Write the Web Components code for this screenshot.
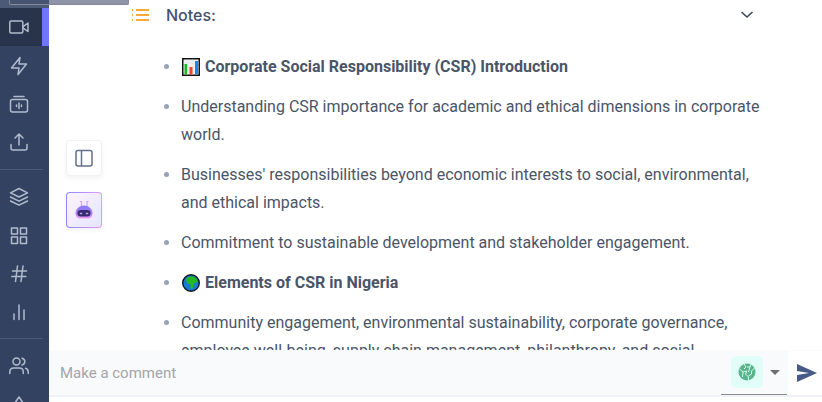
<!DOCTYPE html>
<html lang="en">
<head>
<meta charset="utf-8">
<title>Notes</title>
<style>
body{margin:0;background:#fff;font-family:Roboto,"Liberation Sans",sans-serif;font-size:16px;color:#4a5568}
</style>
</head>
<body>
<notes-app></notes-app>
<script>
const define = (name, html) => {
  const template = document.createElement('template');
  template.innerHTML = html;
  customElements.define(name, class extends HTMLElement {
    constructor() {
      super();
      this.attachShadow({mode: 'open'}).append(template.content.cloneNode(true));
    }
    connectedCallback() {
      const b = this.shadowRoot.querySelector('button');
      if (b && this.title) b.setAttribute('aria-label', this.title);
    }
  });
};

define('nav-item', `<style>
:host{display:block;height:38px;color:#b0bccd}
:host([active]){background:#27344b;border-right:7px solid #6f76ff;margin-bottom:1px}
button{display:grid;place-items:center;width:38px;height:38px;border:0;padding:0;background:none;color:inherit}
::slotted(svg){width:20px;height:20px;fill:none;stroke:currentColor;stroke-width:1.5;stroke-linecap:round;stroke-linejoin:round}
</style><button type="button"><slot></slot></button>`);

define('side-nav', `<style>
:host{display:block;width:49px;background:#344261;overflow:hidden;position:relative}
nav{display:flex;flex-direction:column}
.top{height:8px;background:#4c5a75}
hr{border:0;height:1px;background:#4b5a77;margin:8px 6px 8px 0;width:43px}
</style><nav aria-label="Main">
<div class="top"></div>
<nav-item active title="Meetings"><svg viewBox="0 0 20 20"><rect x="0.8" y="4" width="13" height="12" rx="1.2"/><path d="M13.8 9.8 19 6v8.500l-5.200-3.700"/></svg></nav-item>
<nav-item title="Automations"><svg viewBox="0 0 20 20"><path d="M11 1.500 2.500 12H10L9 18.500 17.500 8H10Z"/></svg></nav-item>
<nav-item title="Recordings"><svg viewBox="0 0 20 20"><path d="M5 2.500h10"/><rect x="1.500" y="5.500" width="17" height="12.500" rx="2"/><path d="M7.500 11v1.500M10 9v5.500M12.500 11v1.500"/></svg></nav-item>
<nav-item title="Upload"><svg viewBox="0 0 20 20"><path d="M10 13V2M6 6l4-4 4 4M2 12.500V16q0 2 2 2h12q2 0 2-2v-3.500"/></svg></nav-item>
<hr>
<nav-item title="Channels"><svg viewBox="0 0 20 20"><path d="m10 1.500 8.500 4.300L10 10 1.500 5.800ZM1.500 10l8.500 4.200L18.500 10M1.500 14l8.500 4.200 8.500-4.200"/></svg></nav-item>
<nav-item title="Apps"><svg viewBox="0 0 20 20" stroke-linejoin="miter"><path d="M2.500 3h6v6h-6ZM11.500 3h6v6h-6ZM2.500 12h6v6.500h-6ZM11.500 12h6v6.500h-6Z"/></svg></nav-item>
<nav-item title="Topics"><svg viewBox="0 0 20 20"><path d="M3.500 8h14M2.800 13.500h14M8.500 3 6.500 18.500M14 3l-2 15.500"/></svg></nav-item>
<nav-item title="Analytics"><svg viewBox="0 0 20 20"><path d="M5 13v5.500M10 4v14.500M15 9v9.500"/></svg></nav-item>
<hr>
<nav-item title="Team"><svg viewBox="0 0 20 20"><circle cx="7.500" cy="5.500" r="3.500"/><path d="M.8 17.500V16q0-4 4-4h5.500q4 0 4 4v1.500M13 2.200q2.800.7 2.800 3.400T13 9M16.500 12.200q2.700.8 2.700 3.800v1.500"/></svg></nav-item>
<nav-item title="Upgrade"><svg viewBox="0 0 20 20"><path d="m10 3 7 10h-4v5H7v-5H3Z"/></svg></nav-item>
</nav>`);

define('tool-button', `<style>
:host{display:block}
button{display:grid;place-items:center;width:36px;height:36px;padding:0;border:1px solid #f1f2f5;border-radius:4px;background:#fff;box-shadow:0 2px 5px rgb(40 50 80 / .07);color:#64708a}
:host([accent]) button{border-color:transparent;background:linear-gradient(135deg,#fbf3ff,#e6e5ff) padding-box,linear-gradient(90deg,#8b88fb,#e39af5) border-box}
::slotted(svg){width:20px;height:20px}
</style><button type="button"><slot></slot></button>`);

define('note-item', `<style>
:host{display:grid;grid-template-columns:17px 1fr;line-height:28px}
:host::before{content:"";width:5px;height:5px;border-radius:50%;background:#94a3b8;margin-top:11px}
:host([heading]){font-weight:700}
::slotted(svg){width:18px;height:18px;vertical-align:-4px;margin:0 5px 0 1px}
</style><span><slot></slot></span>`);

define('notes-panel', `<style>
:host{display:flex;flex:1;min-height:0;overflow:hidden}
.tools{display:flex;flex-direction:column;gap:16px;padding:140px 0 0 17px;flex:none;width:66px}
section{flex:1;min-width:0}
header{display:flex;align-items:center;height:30px;padding-right:63px}
h2{font:500 16px/30px Inter,sans-serif;margin:0 auto 0 17px;color:#45506a}
header button{width:24px;height:24px;padding:0;border:0;background:none;display:grid;place-items:center}
.list{display:flex;flex-direction:column;gap:12px;padding:23px 56px 0 32px}
</style>
<div class="tools">
<tool-button title="Toggle sidebar"><svg viewBox="0 0 20 20" fill="none" stroke="currentColor" stroke-width="1.500"><rect x="2" y="2.500" width="16" height="15.500" rx="2"/><path d="M7.500 2.500V18"/></svg></tool-button>
<tool-button accent title="Assistant"><svg viewBox="0 0 20 20"><defs><linearGradient id="g" x2="0" y2="1"><stop stop-color="#8577fb"/><stop offset=".55" stop-color="#a77bf7"/><stop offset="1" stop-color="#ef9cf5"/></linearGradient></defs><path d="M7.500 7V1.500H6M13 7V1.500h1.500" fill="none" stroke="#d5a0f2" stroke-width="1.200"/><path d="M10 5.500c5 0 8.500 4 8.500 8 0 3-2.500 5-4.500 5H6c-2 0-4.500-2-4.500-5 0-4 3.500-8 8.500-8" fill="url(#g)"/><rect x="3.500" y="10" width="13" height="6.500" rx="3.200" fill="#372a70"/><path d="M5.800 13.500h2.400M11.800 13.500h2.400" stroke="#b5a0ee" stroke-width="1.300"/></svg></tool-button>
</div>
<section>
<header>
<svg width="17" height="14" viewBox="0 0 17 14" fill="#f8a93d"><path d="M0 1h1v2H0zM4 1h13v2H4zM0 6h1v2H0zM4 6h13v2H4zM0 11h1v2H0zM4 11h13v2H4z"/></svg>
<h2>Notes:</h2>
<button type="button" aria-label="Collapse notes"><svg width="14" height="8" viewBox="0 0 14 8" fill="none" stroke="#3d465f" stroke-width="1.600"><path d="m1.500 1 5.500 5 5.500-5"/></svg></button>
</header>
<div class="list" role="list">
<note-item role="listitem" heading><svg viewBox="0 0 18 18"><path d="M.75.75h16.500v16.500H.75Z" fill="#f1f2f4" stroke="#111" stroke-width="1.500"/><path d="M1.500 5h15M1.500 9h15M1.500 13h15M5.500 1.500v15M10.500 1.500v15" stroke="#dde0e5" stroke-width=".6"/><path d="M2.500 6H5v10.500H2.500Z" fill="#15bd22"/><path d="M7.500 9h3v7.500h-3Z" fill="#ea4633"/><path d="M13 3h3v13.500h-3Z" fill="#1687ea"/></svg>Corporate Social Responsibility (CSR) Introduction</note-item>
<note-item role="listitem">Understanding CSR importance for academic and ethical dimensions in corporate world.</note-item>
<note-item role="listitem">Businesses' responsibilities beyond economic interests to social, environmental, and ethical impacts.</note-item>
<note-item role="listitem">Commitment to sustainable development and stakeholder engagement.</note-item>
<note-item role="listitem" heading><svg viewBox="0 0 18 18"><circle cx="9" cy="9" r="8.300" fill="#1879d2" stroke="#101820" stroke-width="1.400"/><path d="M4 6.500 5 4l3-1.500 4 .2 2.500 2 1 3-1.500.5L12 10l-1.200 4-1.500 1.200-1-1.700.2-3.500-3-.3Z" fill="#24b91f"/><path d="m13 11 .8-.5-.2 2-.8.3Z" fill="#24b91f"/></svg>Elements of CSR in Nigeria</note-item>
<note-item role="listitem">Community engagement, environmental sustainability, corporate governance, employee well-being, supply chain management, philanthropy, and social</note-item>
</div>
</section>`);

define('comment-bar', `<style>
:host{display:flex;flex:none;height:45px;margin-bottom:5px;background:#f9fafc;border-bottom:2px solid #f1f2f7}
input{flex:1;min-width:0;border:0;outline:0;background:none;padding:0 11px;font:15px Roboto,sans-serif;color:#4a5568}
input::placeholder{color:#a3a5a9;opacity:1}
.pick{display:grid;width:66px;border-bottom:1px solid #8b8d91}
.pick>*{grid-area:1/1}
.face{display:flex;align-items:center;padding-left:10px;gap:7px;pointer-events:none}
.tile{display:grid;place-items:center;width:32px;height:32px;border-radius:5px;background:#e1fdf8}
select{appearance:none;border:0;background:none;width:100%}
.send{width:34px;margin:1px 0 0 1px;border:0;padding:0 0 0 4px;background:#fff;border-radius:3px 0 0 0;display:grid;place-items:center}
</style>
<input type="text" placeholder="Make a comment" aria-label="Make a comment">
<div class="pick"><select aria-label="Visibility"><option aria-label="Public"></option></select>
<span class="face"><span class="tile"><svg width="18" height="18" viewBox="0 0 18 18"><circle cx="9" cy="9" r="8.500" fill="#57b58b"/><path d="M1.500 6 5 9l3.500-1M5 9l-.5 5M6 1l2 3-2 2M9 4h3l1-3M9 8l-1.500 3 3 3v3.500M12 4l-1.500 5" fill="none" stroke="#d9faef" stroke-width="1" stroke-linejoin="round"/><path d="M16.500 5 13.500 8v3l-3 2" fill="none" stroke="#d9faef" stroke-width="1"/></svg></span>
<svg width="10" height="5" viewBox="0 0 10 5"><path d="M0 0h10L5 5Z" fill="#6d6f72"/></svg></span></div>
<button class="send" type="button" aria-label="Send"><svg width="20" height="18" viewBox="0 0 20 18"><path d="M0 0 20 9 0 18V11L12 9 0 7Z" fill="#475b86"/></svg></button>`);

define('notes-app', `<style>
:host{display:flex;height:100vh;overflow:hidden;position:relative}
main{flex:1;min-width:0;display:flex;flex-direction:column}
.strip{position:absolute;left:9px;top:0;width:118px;height:4px;background:rgb(67 78 110 / .6);border:1px solid #85899a;border-top:0;border-radius:0 0 2px 2px}
</style><side-nav></side-nav><main><notes-panel></notes-panel><comment-bar></comment-bar></main><div class="strip"></div>`);
</script>
</body>
</html>
